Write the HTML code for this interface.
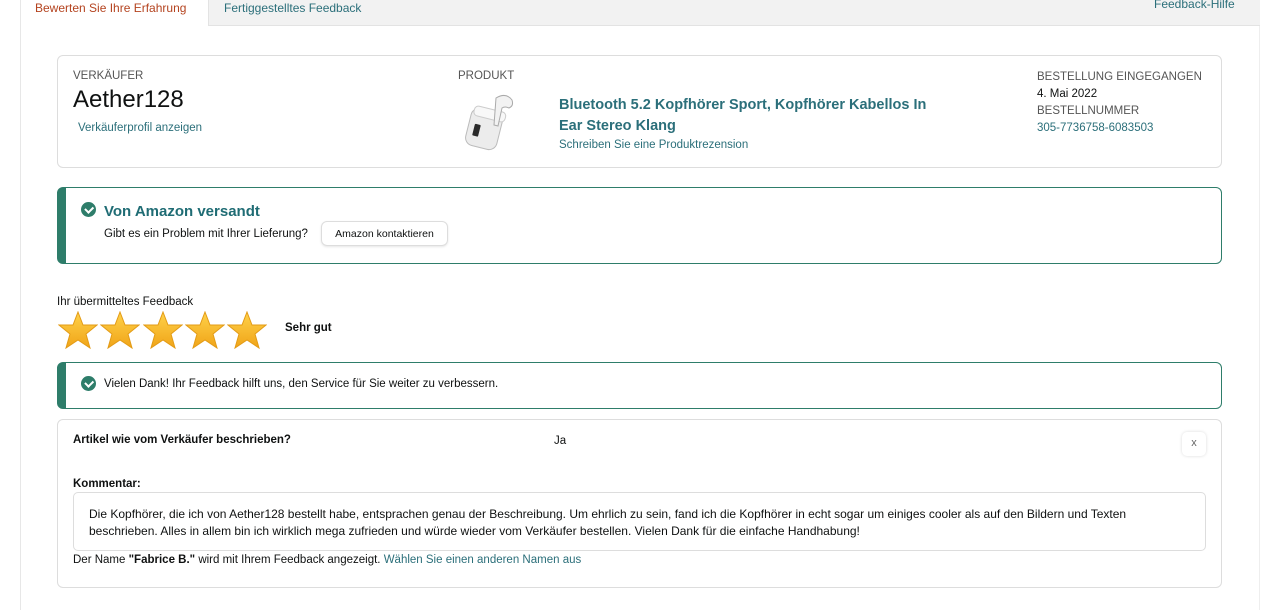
<!DOCTYPE html>
<html><head><meta charset="utf-8"><style>
*{box-sizing:border-box;margin:0;padding:0}
body{width:1280px;height:610px;overflow:hidden;background:#fff;font-family:"Liberation Sans",Arial,sans-serif;color:#0f1111;font-size:11.5px;position:relative}
.a{position:absolute}
.link{color:#2b6f7a}
.box{position:absolute;border:1px solid #ddd;border-radius:6px;background:#fff}
.alert{position:absolute;border:1.5px solid #2e7d6a;border-left:9px solid #2e7d6a;border-radius:6px;background:#fff}
.chk{position:absolute;width:15px;height:15px;border-radius:50%;background:#2e7d6a}
.chk:after{content:"";position:absolute;left:4px;top:3.5px;width:6px;height:3.5px;border-left:2px solid #fff;border-bottom:2px solid #fff;transform:rotate(-45deg)}
.star{position:absolute;top:311px;width:40px;height:38px}
</style></head><body>
<div class="a" style="left:20px;top:0;width:1px;height:610px;background:#e7e7e7"></div>
<div class="a" style="left:1259px;top:0;width:1px;height:610px;background:#eee"></div>
<div class="a" style="left:208px;top:0;width:1052px;height:26px;background:#f2f2f2;border-bottom:1px solid #e3e3e3;border-left:1px solid #e3e3e3"></div>
<div class="a" style="left:35px;top:1px;font-size:12px;color:#b4431f">Bewerten Sie Ihre Erfahrung</div>
<div class="a link" style="left:224px;top:1px;font-size:12px">Fertiggestelltes Feedback</div>
<div class="a link" style="left:1154px;top:-3px;font-size:12px">Feedback-Hilfe</div>

<div class="box" style="left:57px;top:55px;width:1165px;height:113px"></div>
<div class="a" style="left:73px;top:70px;color:#555">VERKÄUFER</div>
<div class="a" style="left:73px;top:86px;font-size:24px">Aether128</div>
<div class="a link" style="left:78px;top:122px">Verkäuferprofil anzeigen</div>
<div class="a" style="left:458px;top:70px;color:#555">PRODUKT</div>
<svg class="a" style="left:460px;top:88px" width="60" height="65" viewBox="0 0 60 65">
<rect x="8" y="22" width="32" height="38" rx="8" transform="rotate(14 24 41)" fill="#ececec" stroke="#bbb"/>
<rect x="10" y="20" width="32" height="10" rx="4" transform="rotate(14 24 41)" fill="#f8f8f8" stroke="#ccc"/>
<rect x="14" y="38" width="6" height="12" rx="1" fill="#2a2a2a" transform="rotate(14 24 41)"/>
<path d="M36 10 q10-6 16 2 q2 6-3 8 q-4-2-7 0 l-4 18 -4-1 z" fill="#f2f2f2" stroke="#aaa"/>
</svg>
<div class="a link" style="left:559px;top:95px;font-size:14.5px;font-weight:bold;line-height:21px;width:385px">Bluetooth 5.2 Kopfhörer Sport, Kopfhörer Kabellos In Ear Stereo Klang</div>
<div class="a link" style="left:559px;top:139px">Schreiben Sie eine Produktrezension</div>
<div class="a" style="left:1037px;top:69px;color:#555;line-height:17px">BESTELLUNG EINGEGANGEN<br><span style="color:#0f1111">4. Mai 2022</span><br>BESTELLNUMMER<br><span class="link">305-7736758-6083503</span></div>

<div class="alert" style="left:57px;top:187px;width:1165px;height:77px"></div>
<div class="chk" style="left:81px;top:202px"></div>
<div class="a link" style="left:104px;top:203px;font-size:15px;font-weight:bold;color:#1f6c74">Von Amazon versandt</div>
<div class="a" style="left:104px;top:228px">Gibt es ein Problem mit Ihrer Lieferung?</div>
<div class="a" style="left:321px;top:221px;width:127px;height:25px;border:1px solid #ddd;border-radius:6px;box-shadow:0 1px 2px rgba(0,0,0,.1);font-size:10.5px;text-align:center;line-height:24px">Amazon kontaktieren</div>

<div class="a" style="left:57px;top:296px">Ihr übermitteltes Feedback</div>
<svg width="0" height="0"><defs><linearGradient id="g" x1="0" y1="0" x2="0" y2="1"><stop offset="0" stop-color="#ffd24a"/><stop offset="1" stop-color="#f0a418"/></linearGradient></defs></svg>
<svg class="star" style="left:58px" viewBox="0 0 40 38"><polygon points="20,1 25,14 39,14 28,23 32,37 20,29 8,37 12,23 1,14 15,14" fill="url(#g)" stroke="#e39b16"/></svg>
<svg class="star" style="left:100px" viewBox="0 0 40 38"><polygon points="20,1 25,14 39,14 28,23 32,37 20,29 8,37 12,23 1,14 15,14" fill="url(#g)" stroke="#e39b16"/></svg>
<svg class="star" style="left:143px" viewBox="0 0 40 38"><polygon points="20,1 25,14 39,14 28,23 32,37 20,29 8,37 12,23 1,14 15,14" fill="url(#g)" stroke="#e39b16"/></svg>
<svg class="star" style="left:185px" viewBox="0 0 40 38"><polygon points="20,1 25,14 39,14 28,23 32,37 20,29 8,37 12,23 1,14 15,14" fill="url(#g)" stroke="#e39b16"/></svg>
<svg class="star" style="left:227px" viewBox="0 0 40 38"><polygon points="20,1 25,14 39,14 28,23 32,37 20,29 8,37 12,23 1,14 15,14" fill="url(#g)" stroke="#e39b16"/></svg>
<div class="a" style="left:285px;top:322px;font-weight:bold">Sehr gut</div>

<div class="alert" style="left:57px;top:362px;width:1165px;height:47px"></div>
<div class="chk" style="left:81px;top:376px"></div>
<div class="a" style="left:104px;top:378px">Vielen Dank! Ihr Feedback hilft uns, den Service für Sie weiter zu verbessern.</div>

<div class="box" style="left:57px;top:419px;width:1165px;height:169px"></div>
<div class="a" style="left:73px;top:434px;font-weight:bold">Artikel wie vom Verkäufer beschrieben?</div>
<div class="a" style="left:554px;top:435px">Ja</div>
<div class="a" style="left:1182px;top:432px;width:24px;height:24px;border-radius:5px;box-shadow:0 0 3px rgba(0,0,0,.15);text-align:center;line-height:22px;color:#666;font-size:11px">x</div>
<div class="a" style="left:73px;top:478px;font-weight:bold">Kommentar:</div>
<div class="box" style="left:73px;top:492px;width:1133px;height:59px;border-radius:5px"></div>
<div class="a" style="left:89px;top:506px;width:1100px;line-height:17px;font-size:12px;white-space:nowrap">Die Kopfhörer, die ich von Aether128 bestellt habe, entsprachen genau der Beschreibung. Um ehrlich zu sein, fand ich die Kopfhörer in echt sogar um einiges cooler als auf den Bildern und Texten<br>beschrieben. Alles in allem bin ich wirklich mega zufrieden und würde wieder vom Verkäufer bestellen. Vielen Dank für die einfache Handhabung!</div>
<div class="a" style="left:73px;top:554px">Der Name <b>"Fabrice B."</b> wird mit Ihrem Feedback angezeigt. <span class="link">Wählen Sie einen anderen Namen aus</span></div>
</body></html>
